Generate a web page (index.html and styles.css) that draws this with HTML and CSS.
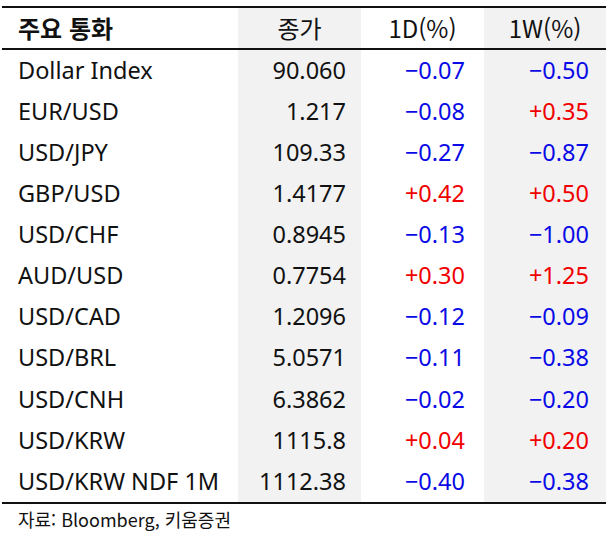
FILE: index.html
```html
<!DOCTYPE html>
<html lang="ko">
<head>
<meta charset="utf-8">
<link rel="stylesheet" href="styles.css">
</head>
<body>
<div class="fx">
  <div class="row head">
    <div class="c name">주요 통화</div>
    <div class="c gray ctr">종가</div>
    <div class="c ctr">1D(%)</div>
    <div class="c gray ctr">1W(%)</div>
  </div>
  <div class="body">
    <div class="row"><div class="c name">Dollar Index</div><div class="c gray num n2">90.060</div><div class="c num n3 neg">−0.07</div><div class="c gray num n4 neg">−0.50</div></div>
    <div class="row"><div class="c name">EUR/USD</div><div class="c gray num n2">1.217</div><div class="c num n3 neg">−0.08</div><div class="c gray num n4 pos">+0.35</div></div>
    <div class="row"><div class="c name">USD/JPY</div><div class="c gray num n2">109.33</div><div class="c num n3 neg">−0.27</div><div class="c gray num n4 neg">−0.87</div></div>
    <div class="row"><div class="c name">GBP/USD</div><div class="c gray num n2">1.4177</div><div class="c num n3 pos">+0.42</div><div class="c gray num n4 pos">+0.50</div></div>
    <div class="row"><div class="c name">USD/CHF</div><div class="c gray num n2">0.8945</div><div class="c num n3 neg">−0.13</div><div class="c gray num n4 neg">−1.00</div></div>
    <div class="row"><div class="c name">AUD/USD</div><div class="c gray num n2">0.7754</div><div class="c num n3 pos">+0.30</div><div class="c gray num n4 pos">+1.25</div></div>
    <div class="row"><div class="c name">USD/CAD</div><div class="c gray num n2">1.2096</div><div class="c num n3 neg">−0.12</div><div class="c gray num n4 neg">−0.09</div></div>
    <div class="row"><div class="c name">USD/BRL</div><div class="c gray num n2">5.0571</div><div class="c num n3 neg">−0.11</div><div class="c gray num n4 neg">−0.38</div></div>
    <div class="row"><div class="c name">USD/CNH</div><div class="c gray num n2">6.3862</div><div class="c num n3 neg">−0.02</div><div class="c gray num n4 neg">−0.20</div></div>
    <div class="row"><div class="c name">USD/KRW</div><div class="c gray num n2">1115.8</div><div class="c num n3 pos">+0.04</div><div class="c gray num n4 pos">+0.20</div></div>
    <div class="row"><div class="c name">USD/KRW NDF 1M</div><div class="c gray num n2">1112.38</div><div class="c num n3 neg">−0.40</div><div class="c gray num n4 neg">−0.38</div></div>
  </div>
  <div class="src">자료: Bloomberg, 키움증권</div>
</div>
</body>
</html>
```

FILE: styles.css
```css
html, body {
  margin: 0;
  padding: 0;
  background: #ffffff;
}
body {
  font-family: "Noto Sans", "Noto Sans CJK KR", sans-serif;
  color: #111111;
}
.fx {
  width: 604px;
  margin: 6px 0 0 2px;
}
.row {
  display: grid;
  grid-template-columns: 236px 123px 123px 122px;
  height: 41.1px;
}
.head {
  height: 40px;
  border-top: 2px solid #111;
  border-bottom: 2px solid #111;
}
.body {
  border-bottom: 2px solid #111;
}
.c {
  display: flex;
  align-items: center;
  font-size: 23.5px;
  white-space: nowrap;
  line-height: 1;
}
.gray {
  background: #f2f2f2;
}
.name {
  padding-left: 16px;
}
.head .c {
  font-size: 24px;
}
.head .name {
  font-family: "Noto Sans CJK KR", sans-serif;
  font-weight: 700;
}
.ctr {
  justify-content: center;
  font-family: "Noto Sans CJK KR", "Noto Sans", sans-serif;
}
.num {
  justify-content: flex-end;
}
.n2 { padding-right: 15px; }
.n3 { padding-right: 19px; }
.n4 { padding-right: 17px; }
.neg { color: #0a0ae6; }
.pos { color: #f00000; }
.src {
  height: 30px;
  display: flex;
  align-items: center;
  padding-left: 16px;
  font-size: 18px;
  font-family: "Noto Sans CJK KR", sans-serif;
}
```
